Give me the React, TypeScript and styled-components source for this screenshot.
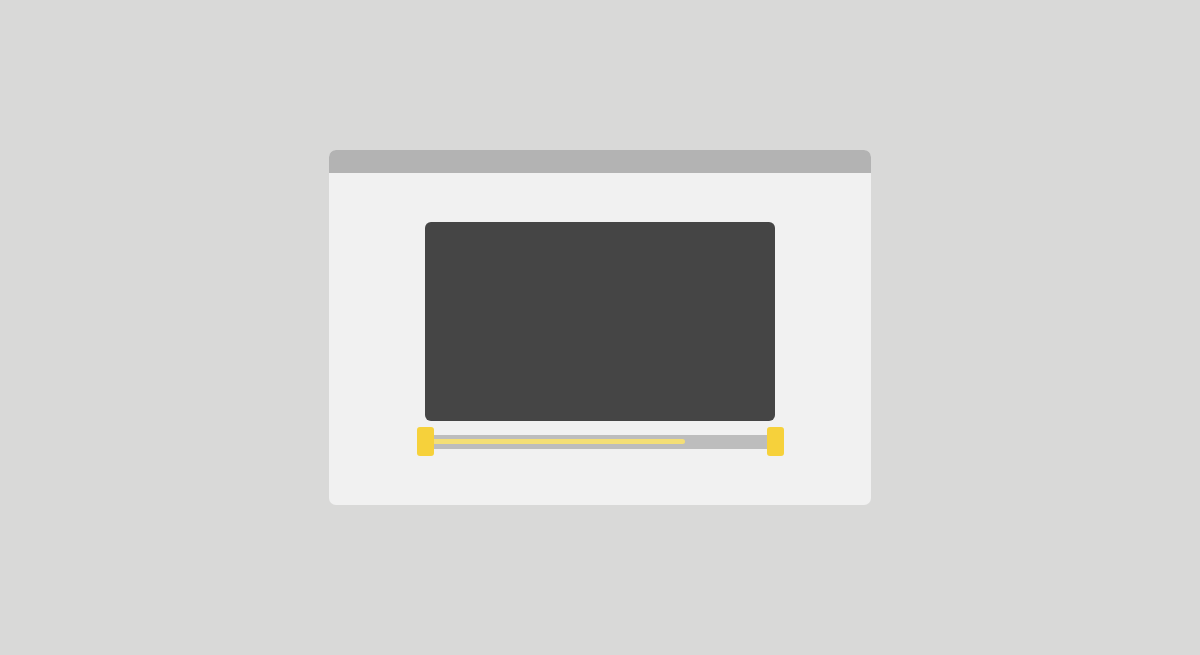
import React from 'react';
import styled, { createGlobalStyle } from 'styled-components';

const GlobalStyle = createGlobalStyle`
  html, body {
    margin: 0;
    padding: 0;
    background: #d9d9d8;
    font-family: "Liberation Sans", Arial, sans-serif;
  }
`;

const Page = styled.div`
  width: 1200px;
  height: 655px;
  display: flex;
  align-items: center;
  justify-content: center;
  background: #d9d9d8;
`;

const Window = styled.div`
  width: 542px;
  height: 355px;
  border-radius: 7px;
  overflow: hidden;
  background: #f1f1f1;
  display: flex;
  flex-direction: column;
`;

const TitleBar = styled.div`
  height: 23px;
  flex-shrink: 0;
  background: #b3b3b3;
`;

const Body = styled.div`
  flex: 1;
  display: flex;
  flex-direction: column;
  align-items: center;
  padding-top: 49px;
  gap: 6px;
`;

const Screen = styled.div`
  width: 350px;
  height: 199px;
  border-radius: 6px;
  background: #454545;
`;

const Slider = styled.div`
  width: 367px;
  height: 29px;
  display: flex;
  align-items: center;
`;

const Handle = styled.div`
  width: 17px;
  height: 29px;
  flex-shrink: 0;
  border-radius: 3px;
  background: #f6d13b;
`;

const Track = styled.div`
  flex: 1;
  height: 14px;
  background: #bdbdbd;
  display: flex;
  align-items: center;
`;

const Fill = styled.div<{ $pct: number }>`
  width: ${(p) => p.$pct}%;
  height: 5px;
  border-radius: 0 3px 3px 0;
  background: #f4df76;
`;

export default function App() {
  return (
    <>
      <GlobalStyle />
      <Page>
        <Window>
          <TitleBar />
          <Body>
            <Screen />
            <Slider>
              <Handle />
              <Track>
                <Fill $pct={75.5} />
              </Track>
              <Handle />
            </Slider>
          </Body>
        </Window>
      </Page>
    </>
  );
}
